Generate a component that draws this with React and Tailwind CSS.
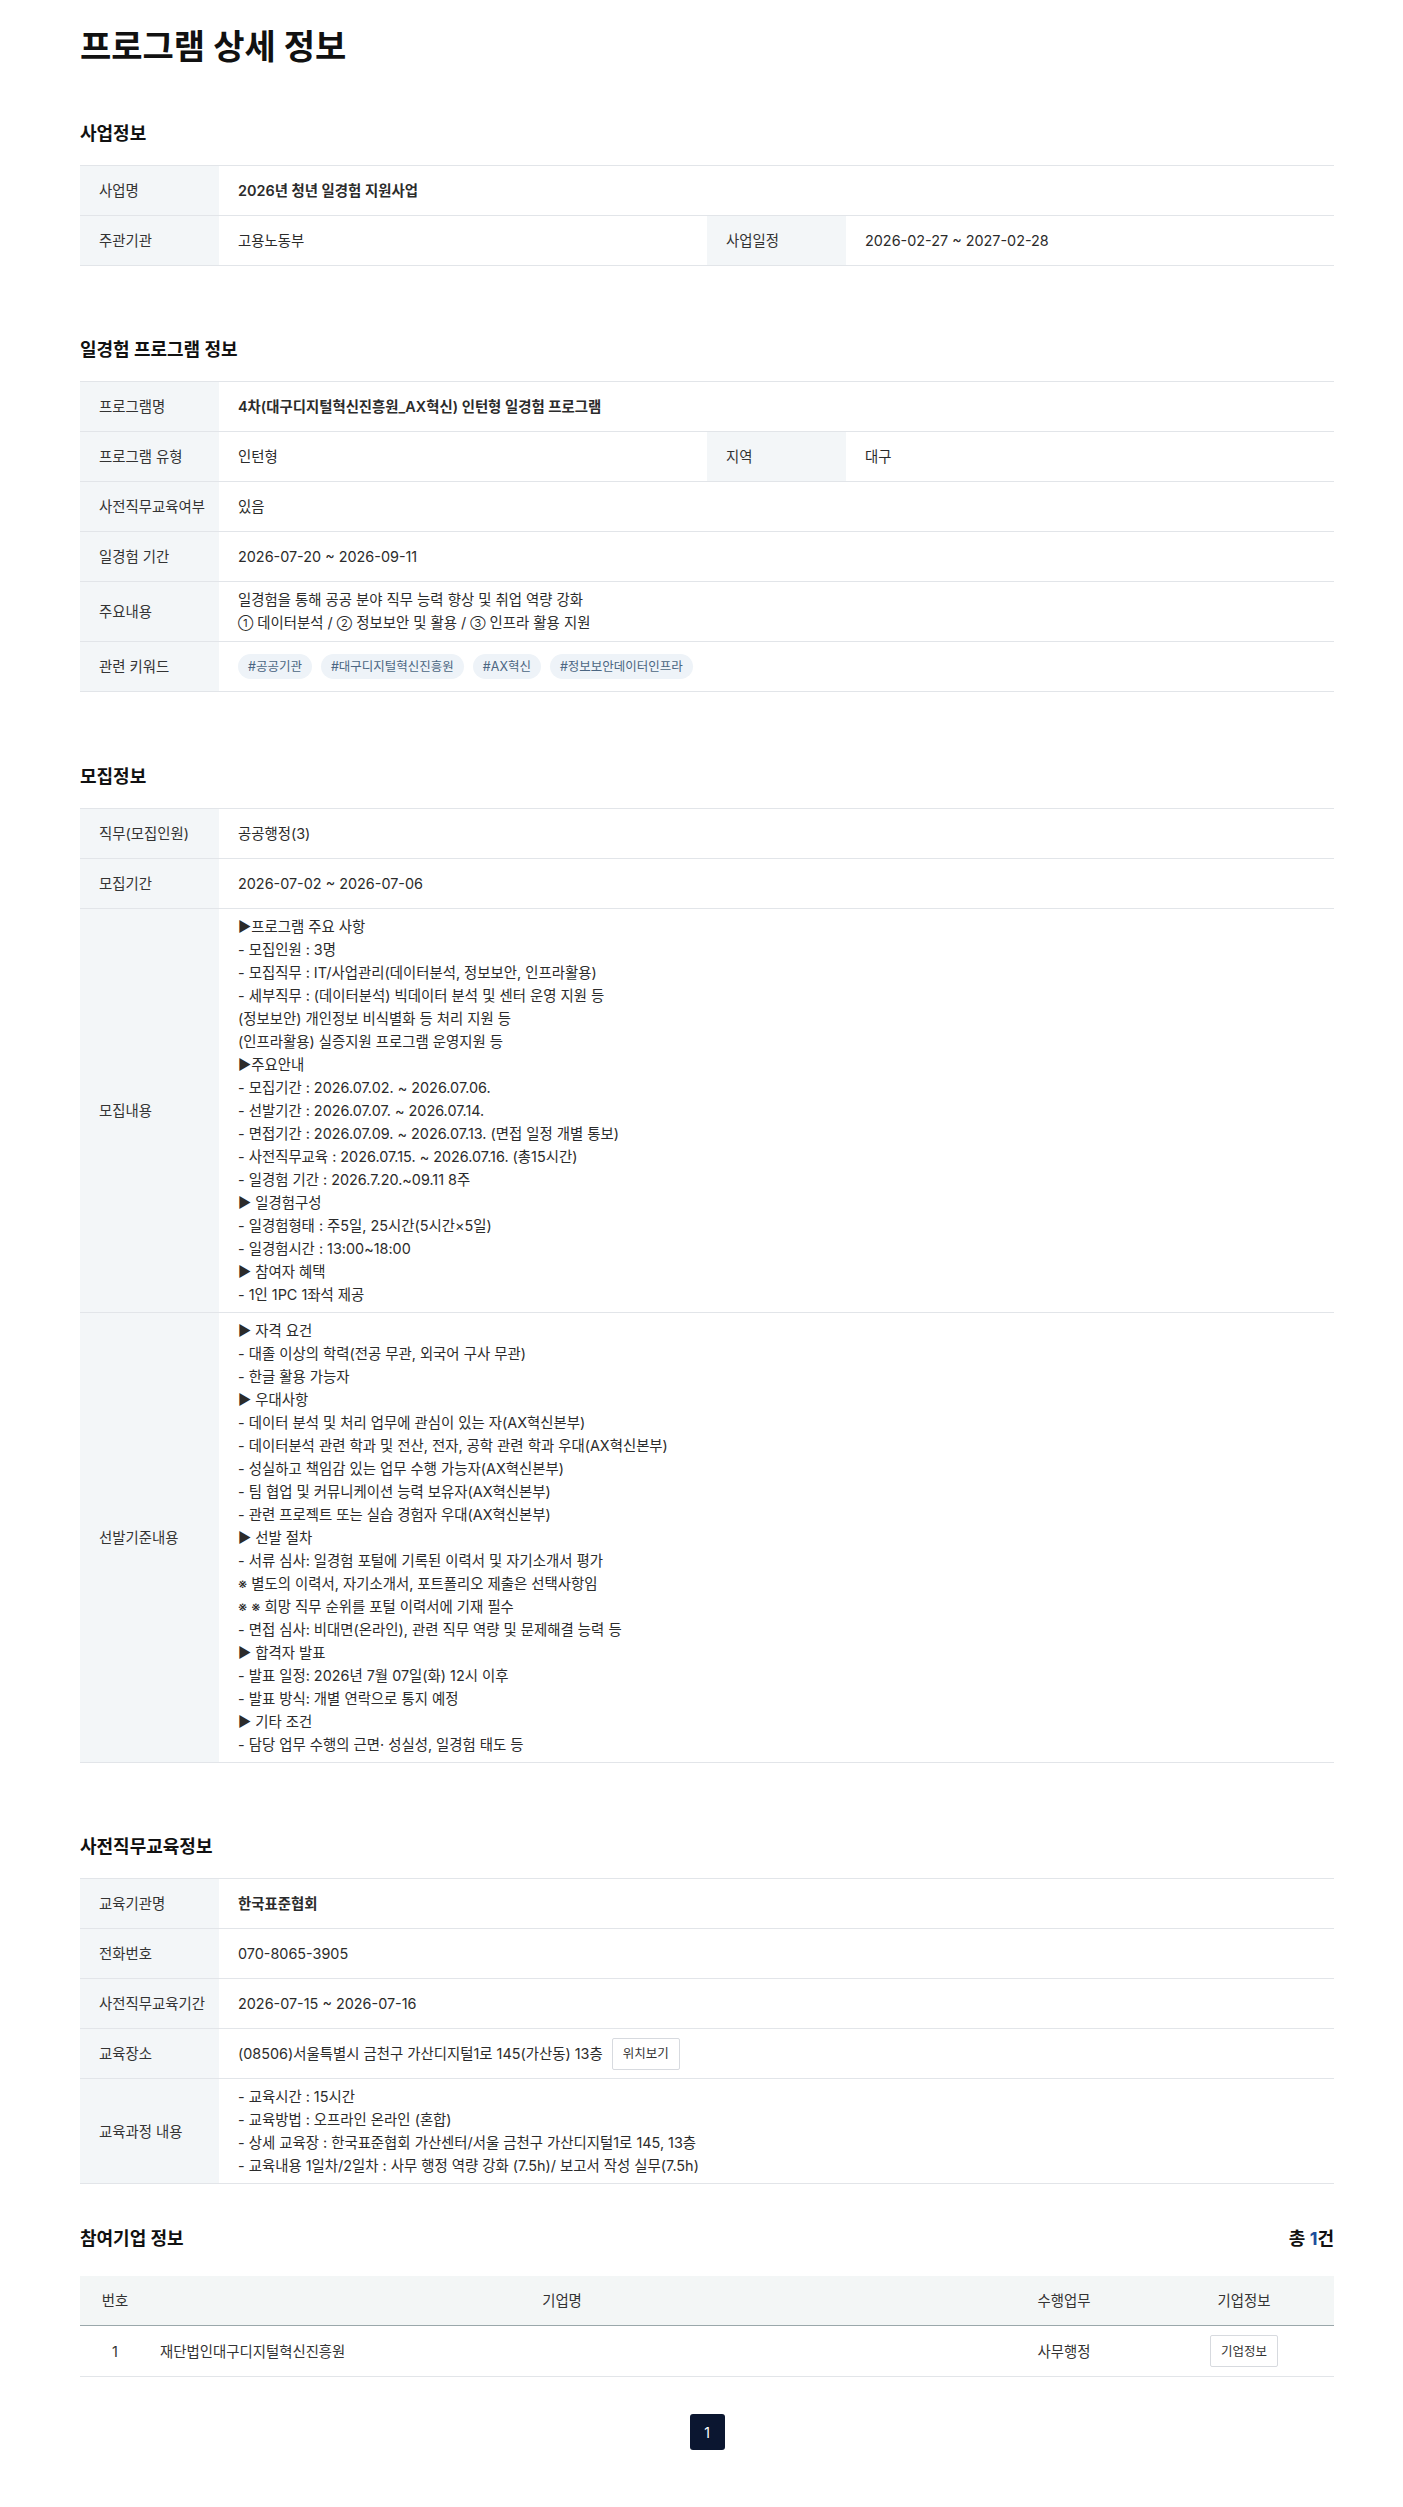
import React from "react";

const recruitText = `▶프로그램 주요 사항
- 모집인원 : 3명
- 모집직무 : IT/사업관리(데이터분석, 정보보안, 인프라활용)
- 세부직무 : (데이터분석) 빅데이터 분석 및 센터 운영 지원 등
(정보보안) 개인정보 비식별화 등 처리 지원 등
(인프라활용) 실증지원 프로그램 운영지원 등
▶주요안내
- 모집기간 : 2026.07.02. ~ 2026.07.06.
- 선발기간 : 2026.07.07. ~ 2026.07.14.
- 면접기간 : 2026.07.09. ~ 2026.07.13. (면접 일정 개별 통보)
- 사전직무교육 : 2026.07.15. ~ 2026.07.16. (총15시간)
- 일경험 기간 : 2026.7.20.~09.11 8주
▶ 일경험구성
- 일경험형태 : 주5일, 25시간(5시간×5일)
- 일경험시간 : 13:00~18:00
▶ 참여자 혜택
- 1인 1PC 1좌석 제공`;

const selectText = `▶ 자격 요건
- 대졸 이상의 학력(전공 무관, 외국어 구사 무관)
- 한글 활용 가능자
▶ 우대사항
- 데이터 분석 및 처리 업무에 관심이 있는 자(AX혁신본부)
- 데이터분석 관련 학과 및 전산, 전자, 공학 관련 학과 우대(AX혁신본부)
- 성실하고 책임감 있는 업무 수행 가능자(AX혁신본부)
- 팀 협업 및 커뮤니케이션 능력 보유자(AX혁신본부)
- 관련 프로젝트 또는 실습 경험자 우대(AX혁신본부)
▶ 선발 절차
- 서류 심사: 일경험 포털에 기록된 이력서 및 자기소개서 평가
※ 별도의 이력서, 자기소개서, 포트폴리오 제출은 선택사항임
※ ※ 희망 직무 순위를 포털 이력서에 기재 필수
- 면접 심사: 비대면(온라인), 관련 직무 역량 및 문제해결 능력 등
▶ 합격자 발표
- 발표 일정: 2026년 7월 07일(화) 12시 이후
- 발표 방식: 개별 연락으로 통지 예정
▶ 기타 조건
- 담당 업무 수행의 근면· 성실성, 일경험 태도 등`;

const courseText = `- 교육시간 : 15시간
- 교육방법 : 오프라인 온라인 (혼합)
- 상세 교육장 : 한국표준협회 가산센터/서울 금천구 가산디지털1로 145, 13층
- 교육내용 1일차/2일차 : 사무 행정 역량 강화 (7.5h)/ 보고서 작성 실무(7.5h)`;

const Label = ({ children }) => (
  <div className="bg-[#f3f6f8] px-[19px] py-[6px] min-h-[49px] flex items-center text-[#333] whitespace-nowrap">
    {children}
  </div>
);

const Value = ({ children, bold }) => (
  <div
    className={`px-[19px] py-[6px] min-h-[49px] flex items-center text-[#2b2b2b] ${
      bold ? "font-semibold" : ""
    }`}
  >
    {children}
  </div>
);

const Row = ({ label, children, bold }) => (
  <div className="grid grid-cols-[139px_1fr] border-b border-[#e2e5e9]">
    <Label>{label}</Label>
    <Value bold={bold}>{children}</Value>
  </div>
);

const Row2 = ({ label, value, label2, value2 }) => (
  <div className="grid grid-cols-[139px_1fr_139px_1fr] border-b border-[#e2e5e9]">
    <Label>{label}</Label>
    <Value>{value}</Value>
    <Label>{label2}</Label>
    <Value>{value2}</Value>
  </div>
);

const Section = ({ title, className, children }) => (
  <section className={className}>
    <h2 className="text-[18px] leading-[26px] font-bold text-[#111] mb-[18px]">{title}</h2>
    <div className="border-t border-[#e2e5e9]">{children}</div>
  </section>
);

const Tag = ({ children }) => (
  <span className="h-[25px] px-[10px] rounded-full bg-[#eef3f8] text-[#4b6682] text-[12.5px] flex items-center">
    {children}
  </span>
);

const SmallButton = ({ children }) => (
  <button className="h-[32px] px-[10px] border border-[#d7dadf] rounded-[2px] bg-white text-[12.5px] text-[#333]">
    {children}
  </button>
);

const Circled = ({ children }) => <span className="text-[11px] align-[1px]">{children}</span>;

export default function App() {
  return (
    <div className="bg-white min-h-[2507px] font-[Inter,'Noto_Sans_CJK_KR',sans-serif] text-[14.4px] leading-[23px]">
      <div className="ml-[80px] w-[1254px] pt-[26px] pb-[59px]">
        <h1 className="text-[34px] leading-[42px] font-bold text-[#111]">프로그램 상세 정보</h1>

        <Section title="사업정보" className="mt-[53px]">
          <Row label="사업명" bold>2026년 청년 일경험 지원사업</Row>
          <Row2 label="주관기관" value="고용노동부" label2="사업일정" value2="2026-02-27 ~ 2027-02-28" />
        </Section>

        <Section title="일경험 프로그램 정보" className="mt-[71px]">
          <Row label="프로그램명" bold>4차(대구디지털혁신진흥원_AX혁신) 인턴형 일경험 프로그램</Row>
          <Row2 label="프로그램 유형" value="인턴형" label2="지역" value2="대구" />
          <Row label="사전직무교육여부">있음</Row>
          <Row label="일경험 기간">2026-07-20 ~ 2026-09-11</Row>
          <Row label="주요내용">
            <div>
              <div>일경험을 통해 공공 분야 직무 능력 향상 및 취업 역량 강화</div>
              <div>
                <Circled>①</Circled> 데이터분석 / <Circled>②</Circled> 정보보안 및 활용 /{" "}
                <Circled>③</Circled> 인프라 활용 지원
              </div>
            </div>
          </Row>
          <Row label="관련 키워드">
            <div className="flex gap-[9px]">
              <Tag>#공공기관</Tag>
              <Tag>#대구디지털혁신진흥원</Tag>
              <Tag>#AX혁신</Tag>
              <Tag>#정보보안데이터인프라</Tag>
            </div>
          </Row>
        </Section>

        <Section title="모집정보" className="mt-[72px]">
          <Row label="직무(모집인원)">공공행정(3)</Row>
          <Row label="모집기간">2026-07-02 ~ 2026-07-06</Row>
          <Row label="모집내용">
            <div className="whitespace-pre-line">{recruitText}</div>
          </Row>
          <Row label="선발기준내용">
            <div className="whitespace-pre-line">{selectText}</div>
          </Row>
        </Section>

        <Section title="사전직무교육정보" className="mt-[71px]">
          <Row label="교육기관명" bold>한국표준협회</Row>
          <Row label="전화번호">070-8065-3905</Row>
          <Row label="사전직무교육기간">2026-07-15 ~ 2026-07-16</Row>
          <Row label="교육장소">
            <div className="flex items-center gap-[9px]">
              <span>(08506)서울특별시 금천구 가산디지털1로 145(가산동) 13층</span>
              <SmallButton>위치보기</SmallButton>
            </div>
          </Row>
          <Row label="교육과정 내용">
            <div className="whitespace-pre-line">{courseText}</div>
          </Row>
        </Section>

        <section className="mt-[42px]">
          <div className="flex items-center justify-between mb-[24px]">
            <h2 className="text-[18px] leading-[26px] font-bold text-[#111]">참여기업 정보</h2>
            <div className="text-[18px] leading-[26px] font-bold text-[#111]">
              총 <span className="text-[#1d4f9c]">1</span>건
            </div>
          </div>
          <div className="grid grid-cols-[70px_1fr_180px_180px] bg-[#f3f6f6] border-b border-[#9aa8ab] h-[50px] items-center text-[#333] text-center">
            <div>번호</div>
            <div>기업명</div>
            <div>수행업무</div>
            <div>기업정보</div>
          </div>
          <div className="grid grid-cols-[70px_1fr_180px_180px] border-b border-[#e2e5e9] h-[51px] items-center text-[#333]">
            <div className="text-center">1</div>
            <div className="pl-[10px]">재단법인대구디지털혁신진흥원</div>
            <div className="text-center">사무행정</div>
            <div className="flex justify-center">
              <SmallButton>기업정보</SmallButton>
            </div>
          </div>
          <div className="flex justify-center mt-[37px]">
            <button className="w-[35px] h-[36px] rounded-[3px] bg-[#0b1630] text-white text-[14px]">1</button>
          </div>
        </section>
      </div>
    </div>
  );
}
